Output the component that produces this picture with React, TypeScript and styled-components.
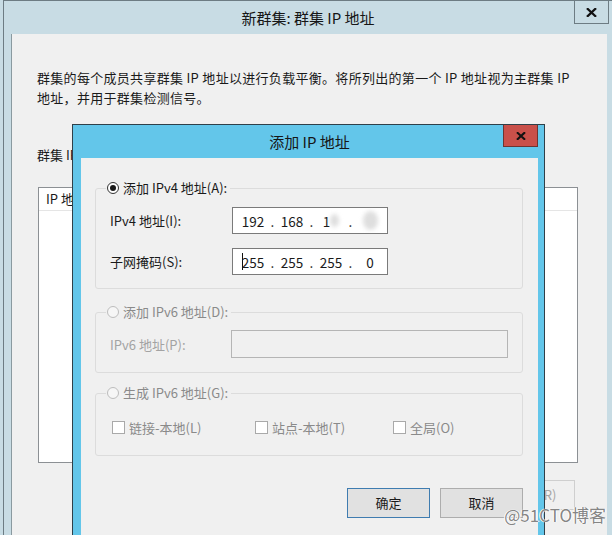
import React from "react";
import styled, { createGlobalStyle } from "styled-components";

const FONT = `"Noto Sans CJK SC", "Noto Sans", "Liberation Sans", sans-serif`;

const GlobalStyle = createGlobalStyle`
  html, body { margin: 0; padding: 0; }
  body { background: #c8dce4; font-family: ${FONT}; font-size: 13px; color: #1a1a1a; }
  * { box-sizing: border-box; }
`;

const Page = styled.div`
  position: relative;
  width: 612px;
  height: 535px;
  overflow: hidden;
  padding-left: 3px;
  background: #c8dce4;
`;

const Window = styled.div`
  height: 100%;
  display: flex;
  flex-direction: column;
  border-left: 1px solid #6d7c83;
  border-top: 1px solid #6d7c83;
  background: #c8dce4;
`;

const TitleBar = styled.div<{ $h: number }>`
  height: ${(p) => p.$h}px;
  flex-shrink: 0;
  display: grid;
  grid-template-columns: 1fr auto 1fr;
  align-items: start;
`;

const Title = styled.div<{ $h: number }>`
  grid-column: 2;
  line-height: ${(p) => p.$h}px;
  font-size: 15px;
  color: #161616;
  white-space: nowrap;
`;

const CloseButton = styled.div<{ $red?: boolean; $w: number; $h: number; $mr: number }>`
  grid-column: 3;
  justify-self: end;
  width: ${(p) => p.$w}px;
  height: ${(p) => p.$h}px;
  margin-right: ${(p) => p.$mr}px;
  display: flex;
  align-items: center;
  justify-content: center;
  background: ${(p) => (p.$red ? "#c9504a" : "transparent")};
  border: 1px solid ${(p) => (p.$red ? "#6e3431" : "#6d7c83")};
  border-top: none;
`;

const Content = styled.div`
  flex: 1;
  margin: 0 5px 0 7px;
  background: #f0f0f0;
  border-left: 1px solid #8a9aa0;
  padding: 34px 0 0 25px;
  display: flex;
  flex-direction: column;
`;

const Paragraph = styled.div`
  line-height: 20px;
  letter-spacing: 0.3px;
  white-space: nowrap;
`;

const ListLabel = styled.div`
  margin-top: 37px;
  line-height: 20px;
`;

const ListBox = styled.div`
  margin: 22px 0 0 1px;
  width: 540px;
  height: 276px;
  background: #fff;
  border: 1px solid #8c9094;
`;

const ListHeader = styled.div`
  height: 23px;
  line-height: 22px;
  padding-left: 7px;
  border-bottom: 1px solid #e5e5e5;
`;

const OuterButtons = styled.div`
  width: 541px;
  margin-top: 17px;
  padding-right: 3px;
  display: flex;
  justify-content: flex-end;
  gap: 8px;
`;

const Button = styled.div<{ $default?: boolean; $disabled?: boolean; $w: number }>`
  width: ${(p) => p.$w}px;
  height: 30px;
  padding-top: 5px;
  line-height: 18px;
  text-align: center;
  background: ${(p) => (p.$disabled ? "#f0f0f0" : "#e1e1e1")};
  border: 1px solid ${(p) => (p.$default ? "#3f7cb0" : p.$disabled ? "#cfcfcf" : "#adadad")};
  color: ${(p) => (p.$disabled ? "#a6a6a6" : "#1a1a1a")};
`;

const Dialog = styled.div`
  position: absolute;
  left: 72px;
  top: 124px;
  width: 473px;
  height: 440px;
  background: #63c6ea;
  border: 1px solid #2f4049;
  padding: 0 6px 0 8px;
  display: flex;
  flex-direction: column;
`;

const DialogBody = styled.div`
  flex: 1;
  background: #f0f0f0;
  padding: 22px 15px 0 14px;
  display: flex;
  flex-direction: column;
`;

const Group = styled.fieldset<{ $mt: number; $pt: number; $pb: number }>`
  margin: ${(p) => p.$mt}px 0 0 0;
  padding: ${(p) => p.$pt}px 14px ${(p) => p.$pb}px 14px;
  border: 1px solid #dcdcdc;
  border-radius: 3px;
  min-width: 0;
`;

const Legend = styled.legend<{ $disabled?: boolean }>`
  margin-left: -4px;
  padding: 0 3px 0 1px;
  height: 16px;
  line-height: 16px;
  display: flex;
  align-items: center;
  gap: 4px;
  color: ${(p) => (p.$disabled ? "#8a8a8a" : "#1a1a1a")};
  white-space: nowrap;
`;

const Radio = styled.span<{ $checked?: boolean; $disabled?: boolean }>`
  width: 12px;
  height: 12px;
  border-radius: 50%;
  border: 1px solid ${(p) => (p.$disabled ? "#bdbdbd" : "#333")};
  background: ${(p) => (p.$disabled ? "#f6f6f6" : "#fff")};
  display: flex;
  align-items: center;
  justify-content: center;
  flex-shrink: 0;
  &::after {
    content: "";
    display: ${(p) => (p.$checked ? "block" : "none")};
    width: 6px;
    height: 6px;
    border-radius: 50%;
    background: #1a1a1a;
  }
`;

const FieldRows = styled.div`
  display: flex;
  flex-direction: column;
  gap: 14px;
`;

const FieldRow = styled.div`
  display: flex;
  align-items: center;
`;

const FieldLabel = styled.div<{ $disabled?: boolean }>`
  width: 122px;
  color: ${(p) => (p.$disabled ? "#a3a3a3" : "#1a1a1a")};
  white-space: nowrap;
`;

const IpBox = styled.div`
  width: 156px;
  height: 27px;
  background: #fff;
  border: 1px solid #7a7a7a;
  padding-left: 5px;
  display: flex;
  align-items: center;
  font-size: 13.5px;
  color: #1a1a1a;
`;

const Segment = styled.span`
  width: 30px;
  display: flex;
  align-items: center;
  justify-content: center;
`;

const Dot = styled.span`
  width: 9px;
  text-align: center;
`;

const Blur = styled.span<{ $w: number; $h: number }>`
  display: inline-block;
  width: ${(p) => p.$w}px;
  height: ${(p) => p.$h}px;
  border-radius: 50%;
  background: #dedede;
  filter: blur(2px);
`;

const Caret = styled.span`
  display: inline-block;
  width: 1px;
  height: 17px;
  background: #111;
  margin-right: -1px;
`;

const DisabledInput = styled.div`
  width: 278px;
  height: 28px;
  background: #f0f0f0;
  border: 1px solid #b5b5b5;
`;

const CheckRow = styled.div`
  display: flex;
  align-items: center;
  height: 18px;
  padding-left: 2px;
`;

const CheckItem = styled.div<{ $w?: number }>`
  width: ${(p) => (p.$w ? `${p.$w}px` : "auto")};
  display: flex;
  align-items: center;
  gap: 4px;
  color: #8a8a8a;
  white-space: nowrap;
`;

const CheckBox = styled.span`
  width: 13px;
  height: 13px;
  border: 1px solid #a9a9a9;
  background: #fff;
  flex-shrink: 0;
`;

const DialogButtons = styled.div`
  margin-top: 32px;
  display: flex;
  justify-content: flex-end;
  gap: 10px;
`;

const Watermark = styled.div`
  position: absolute;
  right: 6px;
  bottom: 11px;
  line-height: 18px;
  font-size: 17px;
  color: #858585;
  text-shadow: 0 0 1px #fff, 0 0 1px #fff, 1px 0 0 #fff, -1px 0 0 #fff;
  white-space: nowrap;
`;

const XIcon = ({ w, h }: { w: number; h: number }) => (
  <svg width={w} height={h} viewBox="0 0 10 9">
    <path d="M1.3 1 L8.7 8 M8.7 1 L1.3 8" stroke="#111" strokeWidth="2.3" strokeLinecap="square" fill="none" />
  </svg>
);

export default function App() {
  return (
    <>
      <GlobalStyle />
      <Page>
        <Window>
          <TitleBar $h={33}>
            <Title $h={33}>新群集: 群集 IP 地址</Title>
            <CloseButton $w={35} $h={23} $mr={3}>
              <XIcon w={11} h={9} />
            </CloseButton>
          </TitleBar>
          <Content>
            <Paragraph>群集的每个成员共享群集 IP 地址以进行负载平衡。将所列出的第一个 IP 地址视为主群集 IP</Paragraph>
            <Paragraph>地址，并用于群集检测信号。</Paragraph>
            <ListLabel>群集 IP 地址(I):</ListLabel>
            <ListBox>
              <ListHeader>IP 地址</ListHeader>
            </ListBox>
            <OuterButtons>
              <Button $w={80} $disabled>删除(R)</Button>
            </OuterButtons>
          </Content>
        </Window>

        <Dialog>
          <TitleBar $h={33}>
            <Title $h={33}>添加 IP 地址</Title>
            <CloseButton $red $w={35} $h={22} $mr={0}>
              <XIcon w={10} h={8} />
            </CloseButton>
          </TitleBar>
          <DialogBody>
            <Group $mt={0} $pt={11} $pb={13}>
              <Legend>
                <Radio $checked />
                添加 IPv4 地址(A):
              </Legend>
              <FieldRows>
                <FieldRow>
                  <FieldLabel>IPv4 地址(I):</FieldLabel>
                  <IpBox>
                    <Segment>192</Segment>
                    <Dot>.</Dot>
                    <Segment>168</Segment>
                    <Dot>.</Dot>
                    <Segment>
                      1<Blur $w={9} $h={13} />
                    </Segment>
                    <Dot>.</Dot>
                    <Segment>
                      <Blur $w={15} $h={19} />
                    </Segment>
                  </IpBox>
                </FieldRow>
                <FieldRow>
                  <FieldLabel>子网掩码(S):</FieldLabel>
                  <IpBox>
                    <Segment>
                      <Caret />
                      255
                    </Segment>
                    <Dot>.</Dot>
                    <Segment>255</Segment>
                    <Dot>.</Dot>
                    <Segment>255</Segment>
                    <Dot>.</Dot>
                    <Segment>0</Segment>
                  </IpBox>
                </FieldRow>
              </FieldRows>
            </Group>

            <Group $mt={15} $pt={10} $pb={14}>
              <Legend $disabled>
                <Radio $disabled />
                添加 IPv6 地址(D):
              </Legend>
              <FieldRow>
                <FieldLabel $disabled>IPv6 地址(P):</FieldLabel>
                <DisabledInput />
              </FieldRow>
            </Group>

            <Group $mt={12} $pt={17} $pb={19}>
              <Legend $disabled>
                <Radio $disabled />
                生成 IPv6 地址(G):
              </Legend>
              <CheckRow>
                <CheckItem $w={143}>
                  <CheckBox />
                  链接-本地(L)
                </CheckItem>
                <CheckItem $w={138}>
                  <CheckBox />
                  站点-本地(T)
                </CheckItem>
                <CheckItem>
                  <CheckBox />
                  全局(O)
                </CheckItem>
              </CheckRow>
            </Group>

            <DialogButtons>
              <Button $w={83} $default>确定</Button>
              <Button $w={83}>取消</Button>
            </DialogButtons>
          </DialogBody>
        </Dialog>

        <Watermark>@51CTO博客</Watermark>
      </Page>
    </>
  );
}
